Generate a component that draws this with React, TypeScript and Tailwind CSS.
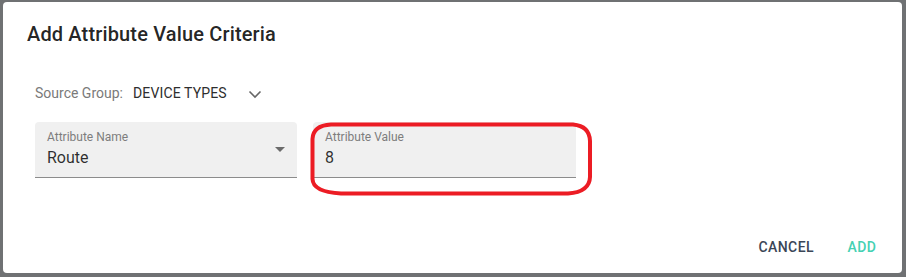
const fieldBase =
  "relative h-[56px] rounded-t-[4px] bg-[#f0f0f0] border-b border-[#8c8c8c] px-[12px] pt-[8px]";

const App = () => {
  return (
    <div className="w-[906px] h-[277px] bg-[#6f7173] pl-[3px] pt-[2px] font-['Roboto',sans-serif]">
      <div className="relative w-[899px] h-[271px] bg-white rounded-[4px] flex flex-col">
        {/* title */}
        <h2 className="mt-[16px] px-[24px] h-[32px] leading-[32px] text-[20px] font-medium text-[rgba(0,0,0,0.87)] tracking-[0.0075em]">
          Add Attribute Value Criteria
        </h2>

        <div className="px-[32px]">
          {/* source group */}
          <div className="mt-[31px] h-[24px] flex items-center text-[14px]">
            <span className="text-[#7a7a7a]">Source Group:</span>
            <span className="ml-[10px] text-[#2e2e2e] uppercase tracking-[0.01em]">Device Types</span>
            <svg className="ml-[21px] mt-[2px]" width="14" height="9" viewBox="0 0 14 9" fill="none">
              <path d="M1.5 1.5 L7 7 L12.5 1.5" stroke="#666" strokeWidth="1.6" />
            </svg>
          </div>

          {/* fields */}
          <div className="mt-[17px] flex gap-[16px]">
            <div className={`${fieldBase} w-[262px]`}>
              <div className="text-[12px] leading-[14px] text-[#7d7d7d]">Attribute Name</div>
              <div className="mt-[4px] text-[16px] leading-[20px] text-[rgba(0,0,0,0.82)]">Route</div>
              <svg className="absolute right-[12px] top-[25px]" width="10" height="5" viewBox="0 0 10 5">
                <path d="M0 0 L10 0 L5 5 Z" fill="#6b6b6b" />
              </svg>
            </div>
            <div className={`${fieldBase} w-[263px]`}>
              <div className="text-[12px] leading-[14px] text-[#7d7d7d]">Attribute Value</div>
              <div className="mt-[4px] text-[16px] leading-[20px] text-[rgba(0,0,0,0.82)]">8</div>
            </div>
          </div>
        </div>

        {/* actions */}
        <div className="mt-auto p-[8px] flex justify-end gap-[8px]">
          <button className="h-[36px] min-w-[64px] px-[8px] text-[14px] font-medium uppercase tracking-[0.03em] text-[#3b4657]">
            Cancel
          </button>
          <button className="h-[36px] min-w-[64px] px-[8px] text-[14px] font-medium uppercase tracking-[0.03em] text-[#45d1b3]">
            Add
          </button>
        </div>

        {/* red annotation ring */}
        <svg className="absolute left-0 top-0 pointer-events-none" width="899" height="271" viewBox="0 0 899 271">
          <path
            d="M328 122.5 L570 122.5 Q586.5 124 587 139 L587 175 Q586.5 190 565 191.5 L338 191.5 Q310 190 309.5 177 L309.5 137 Q310 123.5 328 122.5 Z"
            fill="none"
            stroke="#ec1c24"
            strokeWidth="4"
          />
        </svg>
      </div>
    </div>
  );
};

export default App;
